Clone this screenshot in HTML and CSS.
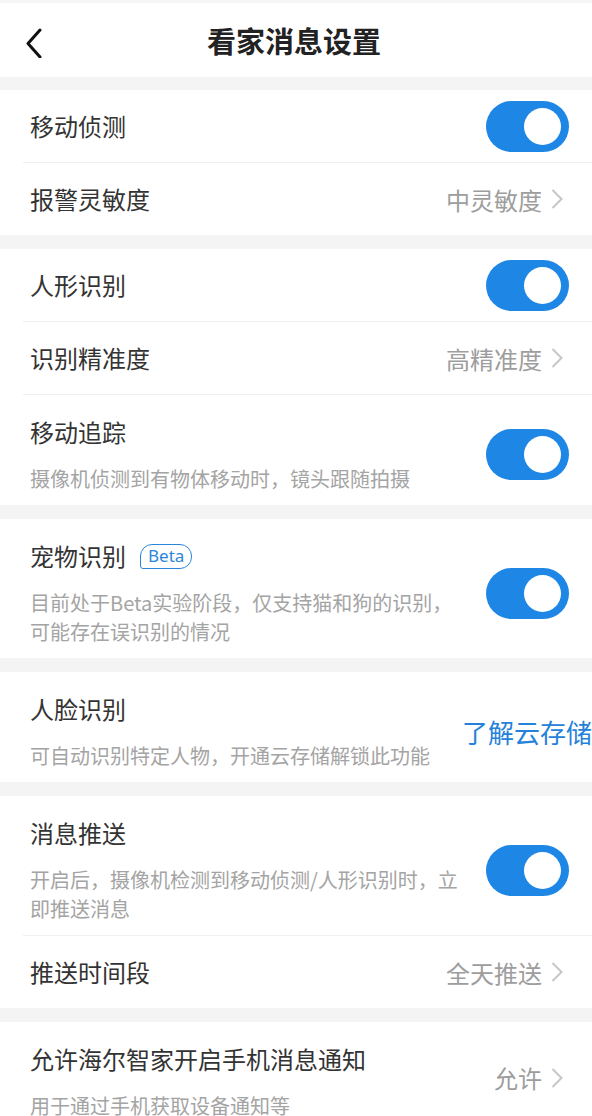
FILE: index.html
```html
<!DOCTYPE html>
<html lang="zh-CN">
<head>
    <meta charset="UTF-8">
    <meta name="viewport" content="width=device-width, initial-scale=1.0">
    <title>看家消息设置</title>
    <link rel="stylesheet" href="styles.css">
</head>
<body>

    <header class="topbar">
        <button class="back" aria-label="返回">
            <svg width="20" height="30" viewBox="0 0 20 30">
                <path d="M17 2 L5 15.5 L17 29" fill="none" stroke="#111" stroke-width="3" stroke-linecap="round" stroke-linejoin="round"/>
            </svg>
        </button>
        <h1>看家消息设置</h1>
        <span></span>
    </header>

    <section class="group">
        <div class="row">
            <span class="label">移动侦测</span>
            <span class="switch on"></span>
        </div>
        <div class="line"></div>
        <div class="row">
            <span class="label">报警灵敏度</span>
            <span class="value">中灵敏度
                <svg class="arrow" width="12" height="20" viewBox="0 0 12 20"><path d="M1.5 1 L10.5 10 L1.5 19" fill="none" stroke="#c6c6c6" stroke-width="2"/></svg>
            </span>
        </div>
    </section>

    <section class="group">
        <div class="row">
            <span class="label">人形识别</span>
            <span class="switch on"></span>
        </div>
        <div class="line"></div>
        <div class="row">
            <span class="label">识别精准度</span>
            <span class="value">高精准度
                <svg class="arrow" width="12" height="20" viewBox="0 0 12 20"><path d="M1.5 1 L10.5 10 L1.5 19" fill="none" stroke="#c6c6c6" stroke-width="2"/></svg>
            </span>
        </div>
        <div class="line"></div>
        <div class="row tall">
            <div class="main">
                <div class="label">移动追踪</div>
                <p class="desc">摄像机侦测到有物体移动时，镜头跟随拍摄</p>
            </div>
            <span class="switch on"></span>
        </div>
    </section>

    <section class="group">
        <div class="row tall">
            <div class="main">
                <div class="label">宠物识别 <span class="badge">Beta</span></div>
                <p class="desc">目前处于Beta实验阶段，仅支持猫和狗的识别，<br>可能存在误识别的情况</p>
            </div>
            <span class="switch on"></span>
        </div>
    </section>

    <section class="group">
        <div class="row tall face">
            <div class="main">
                <div class="label">人脸识别</div>
                <p class="desc">可自动识别特定人物，开通云存储解锁此功能</p>
            </div>
            <a class="link" href="#">了解云存储</a>
        </div>
    </section>

    <section class="group">
        <div class="row tall">
            <div class="main">
                <div class="label">消息推送</div>
                <p class="desc">开启后，摄像机检测到移动侦测/人形识别时，立<br>即推送消息</p>
            </div>
            <span class="switch on"></span>
        </div>
        <div class="line"></div>
        <div class="row">
            <span class="label">推送时间段</span>
            <span class="value">全天推送
                <svg class="arrow" width="12" height="20" viewBox="0 0 12 20"><path d="M1.5 1 L10.5 10 L1.5 19" fill="none" stroke="#c6c6c6" stroke-width="2"/></svg>
            </span>
        </div>
    </section>

    <section class="group">
        <div class="row tall">
            <div class="main">
                <div class="label">允许海尔智家开启手机消息通知</div>
                <p class="desc">用于通过手机获取设备通知等</p>
            </div>
            <span class="value raised">允许
                <svg class="arrow" width="12" height="20" viewBox="0 0 12 20"><path d="M1.5 1 L10.5 10 L1.5 19" fill="none" stroke="#c6c6c6" stroke-width="2"/></svg>
            </span>
        </div>
    </section>

</body>
</html>
```

FILE: styles.css
```css
* {
    margin: 0;
    padding: 0;
    box-sizing: border-box;
}

body {
    font-family: "Noto Sans CJK SC", "Noto Sans", sans-serif;
    background-color: #f4f4f4;
    color: #333;
    overflow-x: hidden;
}

.topbar {
    display: grid;
    grid-template-columns: 1fr auto 1fr;
    align-items: center;
    height: 77px;
    background-color: #fff;
    border-top: 3px solid #f6f6f6;
}

.back {
    justify-self: start;
    display: flex;
    margin: 6px 0 0 23px;
    background: none;
    border: none;
}

.topbar h1 {
    font-size: 29px;
    font-weight: bold;
    color: #222;
    margin-right: 4px;
}

.group {
    margin-top: 14px;
    background-color: #fff;
}

.topbar + .group {
    margin-top: 13px;
}

.row {
    display: flex;
    align-items: center;
    justify-content: space-between;
    height: 72px;
    padding: 0 23px 0 30px;
}

.row.tall {
    height: auto;
    padding-top: 21px;
    padding-bottom: 12px;
}

.main {
    flex: 1;
    min-width: 0;
    margin-right: 16px;
}

.label {
    display: flex;
    align-items: center;
    font-size: 24px;
    line-height: 32px;
    color: #333;
}

.desc {
    margin-top: 16px;
    font-size: 20px;
    line-height: 29px;
    color: #a4a4a4;
    white-space: nowrap;
}

.line {
    height: 1px;
    margin-left: 23px;
    background-color: #efefef;
}

.value {
    display: flex;
    align-items: center;
    font-size: 24px;
    color: #9d9d9d;
    white-space: nowrap;
}

.value.raised {
    margin-bottom: 8px;
}

.arrow {
    margin: 0 6px 0 9px;
}

.switch {
    flex: none;
    display: flex;
    align-items: center;
    justify-content: flex-end;
    width: 83px;
    height: 51px;
    padding: 0 8px;
    border-radius: 26px;
    background-color: #d9d9d9;
}

.switch::after {
    content: "";
    width: 37px;
    height: 37px;
    border-radius: 50%;
    background-color: #fff;
}

.switch.on {
    background-color: #1e87e6;
}

.badge {
    display: inline-flex;
    align-items: center;
    height: 25px;
    margin-left: 14px;
    padding: 0 7px;
    font-family: "Noto Sans", sans-serif;
    font-size: 17px;
    color: #2a86dc;
    border: 1.5px solid #2a86dc;
    border-radius: 12px 12px 12px 3px;
}

.row.face {
    padding-right: 0;
}

.face .main {
    margin-right: 0;
}

.link {
    flex: none;
    margin-right: 0;
    font-size: 26px;
    color: #2581d9;
    text-decoration: none;
    white-space: nowrap;
}
```
